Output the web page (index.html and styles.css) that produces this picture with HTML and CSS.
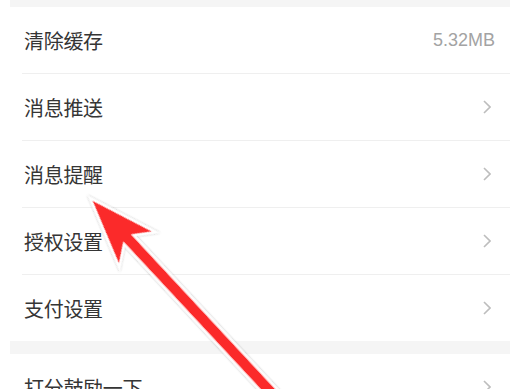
FILE: index.html
```html
<!DOCTYPE html>
<html lang="zh-CN">
<head>
  <meta charset="UTF-8">
  <title>设置</title>
  <link rel="stylesheet" href="styles.css">
</head>
<body>

  <div class="page">
    <div class="band band-top"></div>

    <!-- 设置列表 -->
    <div class="group">
      <div class="row">
        <span class="label">清除缓存</span>
        <span class="value">5.32MB</span>
      </div>
      <div class="row">
        <span class="label">消息推送</span>
        <svg class="chevron" viewBox="0 0 8 14"><path d="M1 1 L7 7 L1 13"/></svg>
      </div>
      <div class="row">
        <span class="label">消息提醒</span>
        <svg class="chevron" viewBox="0 0 8 14"><path d="M1 1 L7 7 L1 13"/></svg>
      </div>
      <div class="row">
        <span class="label">授权设置</span>
        <svg class="chevron" viewBox="0 0 8 14"><path d="M1 1 L7 7 L1 13"/></svg>
      </div>
      <div class="row last">
        <span class="label">支付设置</span>
        <svg class="chevron" viewBox="0 0 8 14"><path d="M1 1 L7 7 L1 13"/></svg>
      </div>
    </div>

    <div class="band"></div>

    <div class="group">
      <div class="row">
        <span class="label">打分鼓励一下</span>
        <svg class="chevron" viewBox="0 0 8 14"><path d="M1 1 L7 7 L1 13"/></svg>
      </div>
    </div>
  </div>

  <!-- 标注箭头 -->
  <svg class="arrow" width="521" height="389" viewBox="0 0 521 389">
    <defs>
      <filter id="shadow" x="-20%" y="-20%" width="140%" height="140%">
        <feDropShadow dx="0" dy="0" stdDeviation="1.2" flood-color="#000" flood-opacity="0.35"/>
      </filter>
    </defs>
    <g transform="translate(90 198) rotate(47.04)" filter="url(#shadow)">
      <polygon points="0,0 70,-25 57,-6.5 400,-6.5 400,6.5 57,6.5 71,26"
               fill="#fb2a2a" stroke="#fff" stroke-width="2.5" stroke-linejoin="miter"/>
    </g>
  </svg>

</body>
</html>
```

FILE: styles.css
```css
* { box-sizing: border-box; margin: 0; padding: 0; }

body {
  font-family: "Noto Sans CJK SC", "Noto Sans", sans-serif;
  background: #fff;
  width: 521px;
  height: 389px;
  overflow: hidden;
  position: relative;
}

.page {
  padding: 0 11px 0 10px;
}

.band {
  height: 13px;
  background-color: #f5f5f5;
}

.band-top {
  height: 7px;
}

.group {
  background-color: #fff;
  padding-left: 12px;
}

.row {
  height: 67px;
  display: flex;
  align-items: center;
  justify-content: space-between;
  padding: 0 15px 0 2px;
  border-bottom: 1px solid #efefef;
}

.row.last {
  border-bottom: none;
  height: 66px;
}

.label {
  font-size: 20px;
  color: #353535;
  letter-spacing: -0.3px;
}

.value {
  font-family: "Liberation Sans", Arial, sans-serif;
  font-size: 18px;
  color: #a3a3a3;
}

.chevron {
  width: 8px;
  height: 14px;
  margin-right: 4px;
  fill: none;
  stroke: #bdbdbd;
  stroke-width: 1.6;
}

.arrow {
  position: absolute;
  left: 0;
  top: 0;
}
```
